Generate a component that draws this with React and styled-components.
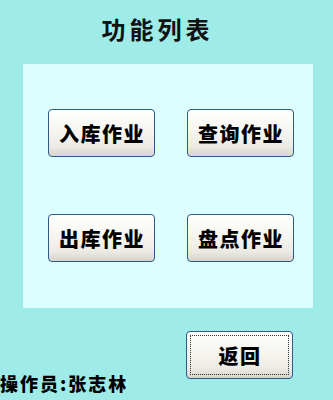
import React from "react";
import styled, { createGlobalStyle } from "styled-components";

const GlobalStyle = createGlobalStyle`
  html, body {
    margin: 0;
    padding: 0;
    background: #9eebe8;
  }
  body {
    font-family: "Noto Sans CJK SC", "Noto Sans", sans-serif;
  }
`;

const Screen = styled.div`
  width: 333px;
  height: 400px;
  background: #9eebe8;
  display: flex;
  flex-direction: column;
  overflow: hidden;
`;

const Title = styled.div`
  height: 64px;
  display: flex;
  align-items: center;
  justify-content: center;
  padding-right: 18px;
  padding-bottom: 8px;
  box-sizing: border-box;
  font-size: 24px;
  font-weight: 700;
  letter-spacing: 4px;
  color: #111;
`;

const Panel = styled.div`
  margin: 0 20px 0 23px;
  height: 244px;
  background: #ddfefe;
  box-sizing: border-box;
  padding: 45px 0 0 25px;
  display: grid;
  grid-template-columns: 107px 107px;
  grid-auto-rows: 48px;
  column-gap: 32px;
  row-gap: 57px;
`;

const Button = styled.button`
  width: 107px;
  height: 48px;
  box-sizing: border-box;
  border: 1px solid #2f5a8e;
  border-radius: 4px;
  background: linear-gradient(#ffffff 0%, #f6f5ef 45%, #ebeae4 80%, #d6d4ca 100%);
  font-family: "Noto Sans CJK SC", "Noto Sans", sans-serif;
  font-size: 20px;
  font-weight: 900;
  letter-spacing: 1.5px;
  color: #000;
  padding: 0 0 0 1px;
  position: relative;
  cursor: pointer;
  &::after {
    content: "";
    display: ${(p) => (p.$focused ? "block" : "none")};
    position: absolute;
    inset: 3px;
    border: 1px dotted #333;
  }
`;

const Footer = styled.div`
  flex: 1;
  display: flex;
  flex-direction: column;
  padding-top: 23px;
`;

const ReturnRow = styled.div`
  display: flex;
  padding-left: 186px;
`;

const Operator = styled.div`
  margin-top: -9px;
  font-size: 18px;
  font-weight: 900;
  color: #000;
  letter-spacing: 2px;
`;

const items = ["入库作业", "查询作业", "出库作业", "盘点作业"];

export default function App() {
  return (
    <Screen>
      <GlobalStyle />
      <Title>功能列表</Title>
      <Panel>
        {items.map((t) => (
          <Button key={t}>{t}</Button>
        ))}
      </Panel>
      <Footer>
        <ReturnRow>
          <Button $focused>返回</Button>
        </ReturnRow>
        <Operator>操作员:张志林</Operator>
      </Footer>
    </Screen>
  );
}
